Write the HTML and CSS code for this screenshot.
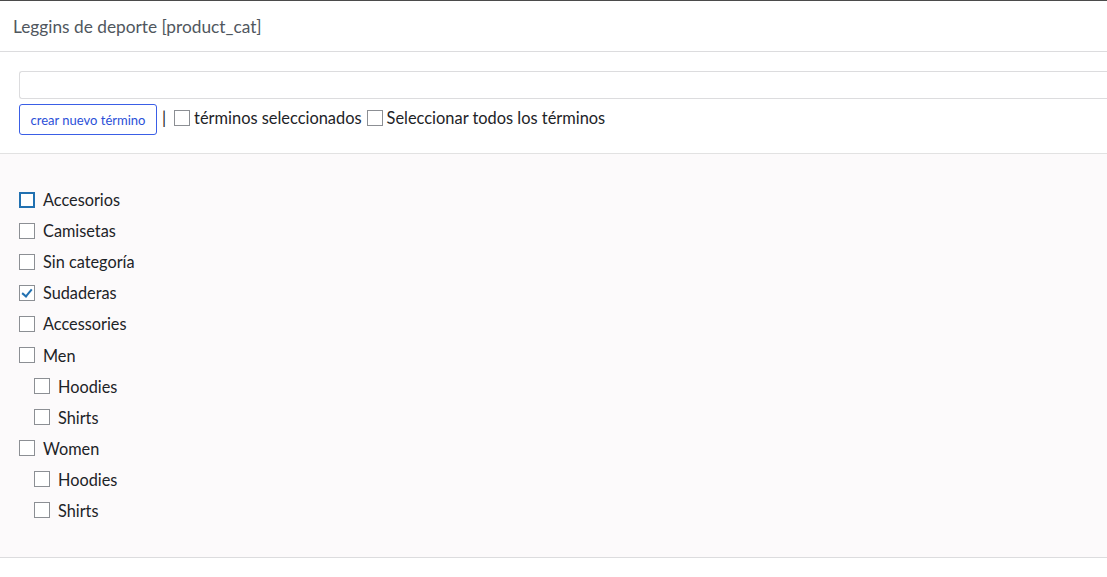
FILE: index.html
```html
<!DOCTYPE html>
<html lang="es">
<head>
  <meta charset="UTF-8" />
  <meta name="viewport" content="width=device-width, initial-scale=1.0"/>
  <title>Leggins de deporte [product_cat]</title>
  <link rel="stylesheet" href="styles.css">
</head>
<body>
  <!-- Panel header -->
  <div class="panel-head">
    <h2>Leggins de deporte [product_cat]</h2>
  </div>

  <!-- Search and actions -->
  <div class="panel-tools">
    <input type="text" class="term-search" />
    <div class="tool-row">
      <button class="new-term-btn">crear nuevo término</button>
      <span class="sep">|</span>
      <label class="tool-check"><input type="checkbox" class="cb" /> términos seleccionados</label>
      <label class="tool-check"><input type="checkbox" class="cb" /> Seleccionar todos los términos</label>
    </div>
  </div>

  <!-- Term list -->
  <div class="panel-list">
    <ul class="terms">
      <li><label><input type="checkbox" class="cb focused" /> Accesorios</label></li>
      <li><label><input type="checkbox" class="cb" /> Camisetas</label></li>
      <li><label><input type="checkbox" class="cb" /> Sin categoría</label></li>
      <li><label><input type="checkbox" class="cb" checked /> Sudaderas</label></li>
      <li><label><input type="checkbox" class="cb" /> Accessories</label></li>
      <li><label><input type="checkbox" class="cb" /> Men</label>
        <ul class="children">
          <li><label><input type="checkbox" class="cb" /> Hoodies</label></li>
          <li><label><input type="checkbox" class="cb" /> Shirts</label></li>
        </ul>
      </li>
      <li><label><input type="checkbox" class="cb" /> Women</label>
        <ul class="children">
          <li><label><input type="checkbox" class="cb" /> Hoodies</label></li>
          <li><label><input type="checkbox" class="cb" /> Shirts</label></li>
        </ul>
      </li>
    </ul>
  </div>
</body>
</html>
```

FILE: styles.css
```css
/* Page */
html, body {
  margin: 0;
  padding: 0;
  background: #ffffff;
  font-family: Lato, 'Noto Sans', sans-serif;
  color: #1d2327;
}

body {
  border-top: 1px solid #4b4b4b;
}

/* Header */
.panel-head {
  height: 50px;
  display: flex;
  align-items: center;
  padding-left: 13px;
  border-bottom: 1px solid #dcdcde;
}

.panel-head h2 {
  margin: 0;
  font-size: 17.3px;
  font-weight: 400;
  color: #50575e;
}

/* Tools */
.panel-tools {
  padding: 19px 0 18px 19px;
  border-bottom: 1px solid #e2e2e2;
}

.term-search {
  display: block;
  box-sizing: border-box;
  width: calc(100% + 10px);
  height: 28px;
  margin: 0;
  border: 1px solid #dcdcde;
  border-right: none;
  border-radius: 3px 0 0 3px;
  background: #fff;
}

.tool-row {
  display: flex;
  align-items: center;
  margin-top: 5px;
  font-size: 16.4px;
}

.new-term-btn {
  height: 31px;
  width: 138px;
  padding: 0;
  font-family: inherit;
  font-size: 13px;
  color: #2b4fd8;
  background: #fff;
  border: 1px solid #3a5ee6;
  border-radius: 3px;
  cursor: pointer;
}

.sep {
  margin: 0 8px 4px 5px;
  color: #1d2327;
}

.tool-check {
  display: flex;
  align-items: center;
  gap: 4px;
  margin: 0 5px 4px 0;
}

/* Checkboxes */
.cb {
  appearance: none;
  -webkit-appearance: none;
  position: relative;
  box-sizing: border-box;
  width: 16px;
  height: 16px;
  margin: 0;
  border: 1px solid #8c8f94;
  background: #fff;
  flex-shrink: 0;
}

.cb.focused {
  border: 2px solid #2271b1;
}

.cb:checked::before {
  content: '';
  position: absolute;
  left: 4px;
  top: 1px;
  width: 4px;
  height: 8px;
  border-right: 2px solid #2271b1;
  border-bottom: 2px solid #2271b1;
  transform: rotate(40deg);
}

/* Term list */
.panel-list {
  background: #fcfafb;
  padding: 30px 0 31px 19px;
  border-bottom: 1px solid #dcdcde;
}

.terms, .children {
  list-style: none;
  margin: 0;
  padding: 0;
}

.children {
  padding-left: 15px;
}

.terms li label {
  display: flex;
  align-items: center;
  gap: 8px;
  height: 31.1px;
  font-size: 16.3px;
}
```
